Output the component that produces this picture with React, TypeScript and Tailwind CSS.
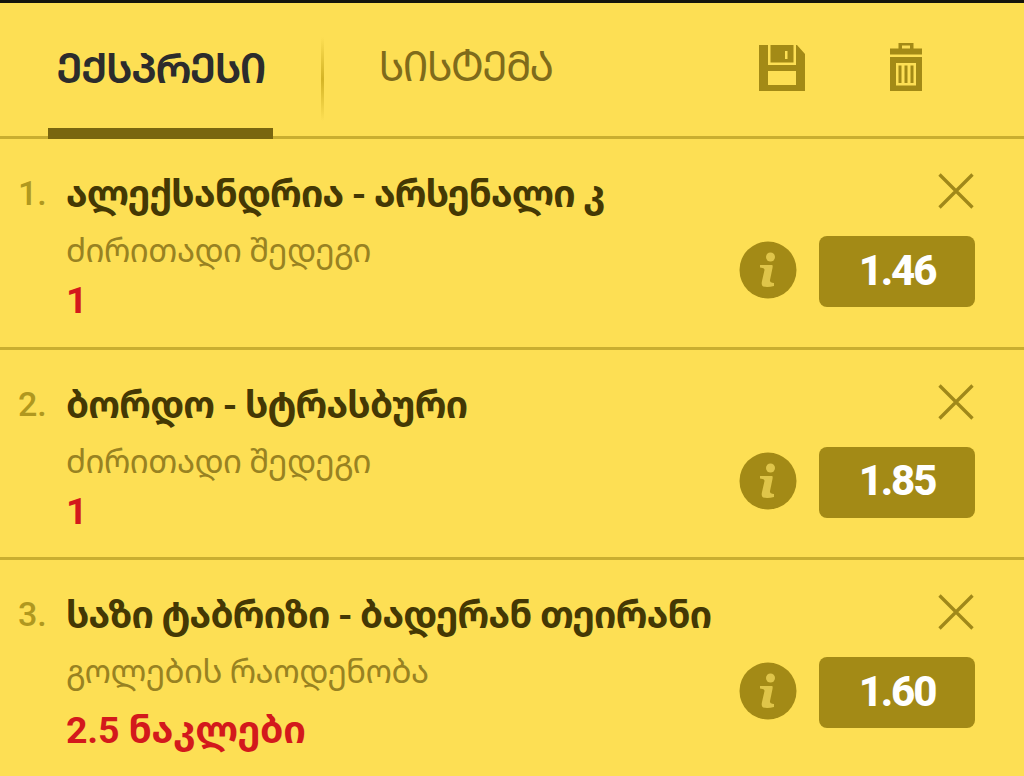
const items = [
  { id: 1, match: "ალექსანდრია - არსენალი კ", market: "ძირითადი შედეგი", pick: "1", odd: "1.46" },
  { id: 2, match: "ბორდო - სტრასბური", market: "ძირითადი შედეგი", pick: "1", odd: "1.85" },
  { id: 3, match: "საზი ტაბრიზი - ბადერან თეირანი", market: "გოლების რაოდენობა", pick: "2.5 ნაკლები", odd: "1.60" },
];

function SaveIcon() {
  return (
    <svg width="46" height="46" viewBox="0 0 46 46" fill="#a38a16">
      <path fillRule="evenodd" d="M0 0H9V20H37V0H38L46 9V46H0ZM9 26V40H37V26Z" />
      <path fillRule="evenodd" d="M11.5 0H34.500V17.500H11.500ZM26 6V14H28.500V6Z" />
    </svg>
  );
}

function TrashIcon() {
  return (
    <svg width="32" height="48" viewBox="0 0 32 48" fill="#a38a16">
      <path fillRule="evenodd" d="M8.500 0H23.500V5.500H32V11.500H0V5.500H8.500ZM12 2.500V5.500H20V2.500Z" />
      <path fillRule="evenodd" d="M0 14H32V48H0ZM6 20V42.500H26V20Z" />
      <path d="M8.500 22.500H11.500V40H8.500ZM14.500 22.500H17.500V40H14.500ZM20.500 22.500H23.500V40H20.500Z" />
    </svg>
  );
}

function CloseIcon() {
  return (
    <svg width="36" height="36" viewBox="0 0 36 36" fill="none" stroke="#a08819" strokeWidth="3.3">
      <path d="M1.500 1.500L34.500 34.500M34.500 1.500L1.500 34.500" />
    </svg>
  );
}

function InfoIcon() {
  return (
    <svg width="58" height="58" viewBox="0 0 58 58">
      <circle cx="29" cy="29" r="28.5" fill="#a38a16" />
      <circle cx="31.5" cy="16" r="4.5" fill="#dfc54a" />
      <path d="M21 24H33Q34 24 33.500 27L31 39Q30.500 42 35 42V45Q29 46.500 24 45.500Q22 44.500 23 40L25.500 29Q26 27 21 26.500Z" fill="#dfc54a" />
    </svg>
  );
}

function BetRow({ item }: any) {
  return (
    <div className="flex h-[210.5px] shrink-0 border-b-[3px] border-[#c9ae30] pr-[49px] last:border-b-0">
      <div className="w-[66px] pl-[18px] pt-[33px] text-[34px] font-medium leading-[42px] text-[#b0981f]">
        {item.id}.
      </div>
      <div className="flex-1 whitespace-nowrap">
        <p className="pt-[32px] text-[37px] font-bold leading-[48px] tracking-[-0.8px] text-[#443804]">{item.match}</p>
        <p className="mt-[9px] text-[33px] leading-[46px] tracking-[-0.5px] text-[#988222]">{item.market}</p>
        <p className={`text-[37.5px] font-bold leading-[48px] tracking-[-0.2px] text-[#d3191c] ${item.id === 3 ? "mt-[11px]" : "mt-[2px]"}`}>
          {item.pick}
        </p>
      </div>
      <div className="flex flex-col items-end">
        <div className="mr-[1px] mt-[34px]">
          <CloseIcon />
        </div>
        <div className="mt-[27px] flex items-center gap-[22px]">
          <div className="-mt-[3px]">
            <InfoIcon />
          </div>
          <div className="flex h-[71px] w-[156px] items-center justify-center rounded-lg bg-[#a38a16] pb-[3px] text-[42px] font-extrabold tracking-[-2.2px] text-white">
            {item.odd}
          </div>
        </div>
      </div>
    </div>
  );
}

export default function App() {
  return (
    <div className="flex h-[776px] w-[1024px] flex-col overflow-hidden border-t-[3px] border-[#14140c] bg-[#fddf54] font-['Roboto','Noto_Sans_Georgian','DejaVu_Sans',sans-serif]">
      <div className="flex h-[136px] shrink-0 border-b-[3px] border-[#c9ae30]">
        <div className="ml-12 flex h-[136px] w-[225px] shrink-0 items-center justify-center border-b-[11px] border-[#79660f] pt-px font-['Noto_Sans_Georgian','DejaVu_Sans',sans-serif] text-[42px] font-semibold tracking-[-1.8px] text-[#2c2c2c] [font-feature-settings:'case'_1]">
          ექსპრესი
        </div>
        <div className="ml-[48px] mt-[34px] h-[84px] w-[3px] bg-gradient-to-b from-transparent via-[#d4b426] to-transparent" />
        <div className="ml-14 flex h-[125px] w-[171px] shrink-0 items-center justify-center pt-px font-['Noto_Sans_Georgian','DejaVu_Sans',sans-serif] text-[41px] tracking-[-1.7px] text-[#7f6b1b] [font-feature-settings:'case'_1]">
          სისტემა
        </div>
        <div className="ml-auto mr-[102px] flex gap-[85px]">
          <div className="mt-[42px]">
            <SaveIcon />
          </div>
          <div className="mt-[40px]">
            <TrashIcon />
          </div>
        </div>
      </div>
      {items.map((item) => (
        <BetRow key={item.id} item={item} />
      ))}
    </div>
  );
}
